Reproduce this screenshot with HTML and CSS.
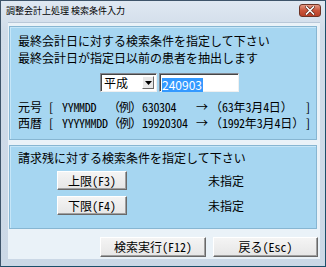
FILE: index.html
```html
<!DOCTYPE html>
<html>
<head>
<meta charset="utf-8">
<title>調整会計上処理 検索条件入力</title>
<link rel="stylesheet" href="styles.css">
</head>
<body>
<div class="window">
    <div class="titlebar">
        <span class="title">調整会計上処理 検索条件入力</span>
        <span class="close">
            <svg width="10" height="9" viewBox="0 0 10 9">
                <path d="M1.5 1 L8.5 8 M8.5 1 L1.5 8" stroke="#5a2418" stroke-width="3" stroke-linecap="square"/>
                <path d="M1.5 1 L8.5 8 M8.5 1 L1.5 8" stroke="#fff" stroke-width="1.6" stroke-linecap="square"/>
            </svg>
        </span>
    </div>
    <div class="client">
        <div class="panel panel-date">
            <div class="line">最終会計日に対する検索条件を指定して下さい</div>
            <div class="line">最終会計日が指定日以前の患者を抽出します</div>
            <div class="date-input">
                <div class="combo">
                    <span class="combo-text">平成</span>
                    <span class="combo-btn">
                        <svg width="7" height="4" viewBox="0 0 7 4"><path d="M0 0 H7 L3.5 4 Z" fill="#000"/></svg>
                    </span>
                </div>
                <div class="textbox"><span class="selected">240903</span></div>
            </div>
            <div class="formats">
                <span>元号</span><span>[</span><span class="half">YYMMDD</span><span class="ex">（例）</span><span class="half">630304</span><span class="arrow">→</span><span>（<span class="half">63</span>年<span class="half">3</span>月<span class="half">4</span>日）</span><span>]</span>
                <span>西暦</span><span>[</span><span class="half">YYYYMMDD</span><span class="ex">（例）</span><span class="half">19920304</span><span class="arrow">→</span><span>（<span class="half">1992</span>年<span class="half">3</span>月<span class="half">4</span>日）</span><span>]</span>
            </div>
        </div>
        <div class="panel panel-balance">
            <div class="line">請求残に対する検索条件を指定して下さい</div>
            <div class="limit-row">
                <button class="btn btn-limit">上限<span class="half">(F3)</span></button>
                <span class="limit-value">未指定</span>
            </div>
            <div class="limit-row">
                <button class="btn btn-limit">下限<span class="half">(F4)</span></button>
                <span class="limit-value">未指定</span>
            </div>
        </div>
        <div class="footer">
            <button class="btn btn-run">検索実行<span class="half">(F12)</span></button>
            <button class="btn btn-back">戻る<span class="half">(Esc)</span></button>
        </div>
    </div>
</div>
</body>
</html>
```

FILE: styles.css
```css
html, body {
    margin: 0;
    padding: 0;
}

* {
    box-sizing: border-box;
}

body {
    font-family: "Noto Sans CJK JP", "Noto Sans", sans-serif;
    font-size: 12px;
    color: #000;
    background: #fff;
}

.half {
    font-feature-settings: "hwid";
}

.window {
    width: 326px;
    height: 267px;
    border: 1px solid #3e546a;
    border-right-color: #1c4f6a;
    border-bottom-color: #1c4f6a;
    background: linear-gradient(#dfe8f2, #d0dce9 30px, #cbd8e6);
    display: flex;
    flex-direction: column;
}

.titlebar {
    height: 21px;
    display: flex;
    align-items: center;
    justify-content: space-between;
    padding: 0 4px 0 5px;
}

.title {
    font-size: 9px;
    line-height: 12px;
    margin-top: -2px;
}

.close {
    width: 22px;
    height: 13px;
    margin-top: -3px;
    border: 1px solid #6d3325;
    border-radius: 3px;
    background: linear-gradient(#e49a86, #c9553b 50%, #b84128);
    display: flex;
    align-items: center;
    justify-content: center;
}

.client {
    flex: 1;
    margin: 0 5px 7px 7px;
    background: #eaf2f8;
    border-top: 1px solid #b9c8d8;
    padding-top: 3px;
}

.panel {
    margin: 0 3px 0 1px;
    background: #a6d6f1;
    border: 1px solid #87b6d2;
    box-shadow: inset 1px 1px 0 #c6e6f8;
    padding: 0 8px;
}

.panel-date {
    height: 114px;
    padding-top: 5px;
}

.panel-balance {
    height: 84px;
    margin-top: 5px;
    padding-top: 4px;
}

.line {
    line-height: 17px;
    white-space: nowrap;
}

.panel-balance .line {
    line-height: 16px;
}

.date-input {
    display: flex;
    gap: 2px;
    margin: 7px 0 0 82px;
    height: 19px;
}

.combo {
    width: 57px;
    display: flex;
    align-items: center;
    justify-content: space-between;
    background: #fff;
    border: 1px solid;
    border-color: #828790 #f0f0f0 #f0f0f0 #828790;
    box-shadow: inset 1px 1px 0 #464646;
    padding: 1px 1px 1px 3px;
}

.combo-text {
    line-height: 14px;
}

.combo-btn {
    width: 12px;
    height: 13px;
    margin-right: 1px;
    background: #e8e8e8;
    border: 1px solid;
    border-color: #fff #6b6b6b #6b6b6b #fff;
    display: flex;
    align-items: center;
    justify-content: center;
}

.textbox {
    width: 80px;
    background: #fff;
    border: 1px solid;
    border-color: #828790 #f0f0f0 #f0f0f0 #828790;
    box-shadow: inset 1px 1px 0 #464646;
    padding: 2px 0 0 2px;
}

.selected {
    display: inline-block;
    background: #3399ff;
    color: #fff;
    line-height: 14px;
    padding-right: 1px;
}

.formats {
    display: grid;
    grid-template-columns: 31px 13px 46px 34px 52px 16px 96px auto;
    grid-auto-rows: 16px;
    margin-top: 7px;
    line-height: 16px;
    white-space: nowrap;
}

.formats .half {
    letter-spacing: -0.3px;
}

.formats .ex {
    letter-spacing: -1px;
}

.formats .arrow {
    text-align: center;
}

.limit-row {
    display: flex;
    align-items: center;
    margin: 5px 0 0 39px;
}

.limit-row + .limit-row {
    margin-top: 6px;
}

.limit-value {
    margin-left: 81px;
}

.btn {
    font-family: inherit;
    font-size: 12px;
    color: #000;
    padding: 0;
    background: linear-gradient(#f4f4f4, #e6e6e6);
    border: 1px solid;
    border-color: #fff #696969 #696969 #fff;
    box-shadow: inset -1px -1px 0 #a0a0a0;
    line-height: 16px;
}

.btn-limit {
    width: 70px;
    height: 19px;
}

.footer {
    display: flex;
    justify-content: flex-end;
    gap: 7px;
    margin-top: 8px;
    padding-right: 2px;
}

.btn-run {
    width: 106px;
    height: 20px;
}

.btn-back {
    width: 105px;
    height: 20px;
}
```
